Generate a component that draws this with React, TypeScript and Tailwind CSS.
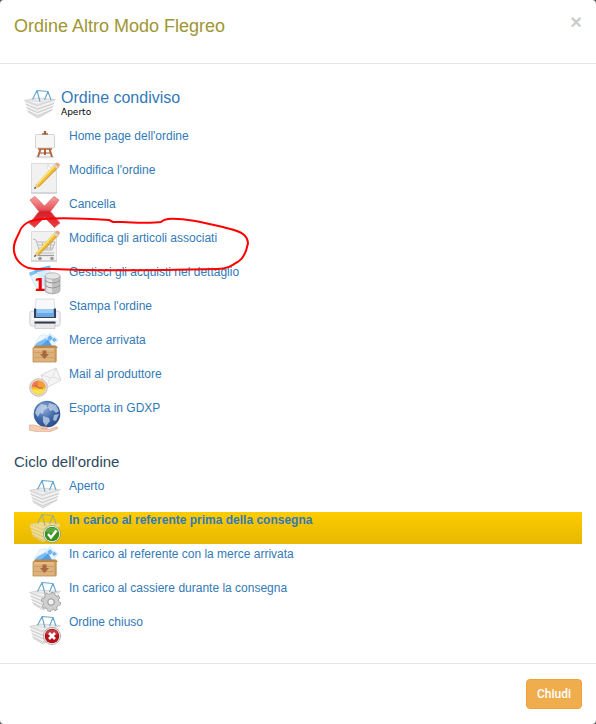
import React from 'react';

const Basket = () => (
  <g strokeLinejoin="round">
    <path d="M1 13 L31 12 L28 22 L14 30 L4 24 Z" fill="#e9e9e9" />
    <path d="M.5 12.500 L12 10 L31.500 11.500 L13 17.500 Z" fill="#e2e2e2" stroke="#cfcfcf" strokeWidth=".7" />
    <path d="M4 12.800 L13 11 L27 12 L13 16 Z" fill="#f1f1f1" />
    <path d="M6 13 L23 13 M9 12 L19 14.500" stroke="#d2d2d2" strokeWidth=".5" />
    <path d="M1.500 16 L13.500 21 L30 15.500 M2.500 19.500 L13.500 24.500 L29 18.500 M3.500 22.500 L13.500 28 L28.500 21.500" fill="none" stroke="#c4c4c4" strokeWidth=".8" />
    <path d="M1 14.500 L13 19.500 L30.500 13.500 M2 18 L13.500 23 L29.500 17 M3 21.300 L13.500 26.300 L29 20" fill="none" stroke="#fafafa" strokeWidth=".8" />
    <path d="M4 24 L14 30 L28 22" fill="none" stroke="#cccccc" strokeWidth=".8" />
    <path d="M8.500 11.500 L13 2.500 L24 3.500 L27 12 M16 13.500 L13 2.500 M20.500 12 L24 3.500" fill="none" stroke="#65a5cc" strokeWidth="1.100" />
  </g>
);

const Pencil = () => (
  <g>
    <path d="M5 27 L7 22.500 L26 2 L29.500 5 L9.500 25 Z" fill="#efbd2b" />
    <path d="M7.800 23 L26.500 3" stroke="#ffe58b" strokeWidth="1.200" />
    <path d="M9.500 25 L29.500 5" stroke="#c18a24" strokeWidth=".9" />
    <path d="M24.500 3.800 L26 2 L29.500 5 L27.700 6.800 Z" fill="#d6d6d6" />
    <path d="M26 2 L27.500 .8 Q30.500 .5 31 3.500 L29.500 5 Z" fill="#eba27f" />
    <path d="M5 27 L7 22.500 L9.500 25 Z" fill="#ead0a6" />
    <path d="M5 27 L6 24.800 L7.300 26 Z" fill="#333" />
  </g>
);

const Paper = () => (
  <g>
    <path d="M2.500 1.500 H27.500 V31 H2.500 Z" fill="#f1f1f1" stroke="#dcdcdc" />
    <path d="M2 31 H28" stroke="#c2c2c2" />
  </g>
);

const Crate = () => (
  <g>
    <path d="M5 13 L11 3.500 L17 2.500 L20 14 Z" fill="#eef6ff" stroke="#c9e1f8" strokeWidth=".6" />
    <path d="M15 7 L21 1 L29 8 L24 14 H15 Z" fill="#eaf5ff" stroke="#c4def6" strokeWidth=".6" />
    <path d="M18 6 L21 3 L24 6 L21 9 Z M23 8 L25 5.500 L28 8 L25 10 Z" fill="#6eb3f0" />
    <path d="M6 14 C8 9 13 9 17 6 L20 14 Z" fill="#7cbcf5" />
    <path d="M11 14 C15 12 17 9 19 7 L23 14 Z" fill="#4f9ee9" />
    <path d="M4 16 L6 13.500 H27 L29 16 Z" fill="#b98548" />
    <path d="M4 16 H27 V30 H4 Z" fill="#dcb17c" stroke="#bd8e52" strokeWidth=".8" />
    <path d="M25.500 16 L27.500 14 V29 L25.500 30 Z" fill="#c7965b" />
    <path d="M5 20.500 H25 M5 25.500 H25" stroke="#c69a62" strokeWidth=".7" />
    <path d="M5 17 H25" stroke="#f1cf9d" />
    <path d="M13.500 18.500 H17.500 V22 H20 L15.500 27 L11 22 H13.500 Z" fill="#a8683f" />
  </g>
);

type IconName = 'basket' | 'easel' | 'edit' | 'delete' | 'articles' | 'purchases' | 'print' | 'crate' | 'mail' | 'export' | 'basketOk' | 'basketGear' | 'basketClosed';

const drawings: Record<IconName, React.ReactNode> = {
  basket: <Basket />,
  basketOk: (
    <g>
      <g opacity=".6"><Basket /></g>
      <circle cx="23" cy="22" r="8.500" fill="#fff" stroke="#7a8a70" strokeWidth=".7" />
      <circle cx="23" cy="22" r="7.300" fill="#37901f" />
      <path d="M16.500 20 A7 7 0 0 1 29.500 20 Q23 22 16.500 20" fill="#5aa843" />
      <path d="M19 22 L22 25.500 L27.500 18.500" fill="none" stroke="#fff" strokeWidth="2.400" />
    </g>
  ),
  basketGear: (
    <g>
      <Basket />
      <circle cx="22" cy="22" r="8.600" fill="none" stroke="#8c8c8c" strokeWidth="2.600" strokeDasharray="3.400 3.355" />
      <circle cx="22" cy="22" r="5.700" fill="none" stroke="#8c8c8c" strokeWidth="5.400" />
      <circle cx="22" cy="22" r="8.200" fill="none" stroke="#cdcdcd" strokeWidth="2.200" strokeDasharray="2.800 3.640" strokeDashoffset="-.3" />
      <circle cx="22" cy="22" r="5.700" fill="none" stroke="#cfcfcf" strokeWidth="4.400" />
      <circle cx="22" cy="22" r="3" fill="#f3f3f3" stroke="#999" strokeWidth=".7" />
    </g>
  ),
  basketClosed: (
    <g>
      <Basket />
      <circle cx="23" cy="22" r="8.500" fill="#fff" stroke="#888" strokeWidth=".7" />
      <circle cx="23" cy="22" r="7.300" fill="#b5121b" />
      <path d="M16.500 20 A7 7 0 0 1 29.500 20 Q23 22 16.500 20" fill="#c63b40" />
      <path d="M20 19 L26 25 M26 19 L20 25" stroke="#fff" strokeWidth="2.600" />
    </g>
  ),
  easel: (
    <g>
      <ellipse cx="16" cy="29" rx="10" ry="1.500" fill="#dedede" />
      <path d="M14.800 3 H17.200 V7 H14.800 Z" fill="#a85c38" />
      <path d="M11.500 21 L9 29 M16 21 V27 M20.500 21 L23 29" stroke="#b5673f" strokeWidth="2" />
      <path d="M11 25 H21" stroke="#96502e" />
      <rect x="6.500" y="6.500" width="19" height="13.500" rx="1" fill="#f6f6f4" stroke="#d3d3d0" />
      <path d="M9 21 H23" stroke="#b9683c" strokeWidth="1.600" />
      <path d="M13 6 H19" stroke="#8d5233" strokeWidth="1.200" />
    </g>
  ),
  edit: (
    <g>
      <Paper />
      <path d="M19 2 Q20 8 27 9 L20 9 Q17 5 19 2 Z" fill="#fff" stroke="#d7d7d7" strokeWidth=".7" />
      <Pencil />
    </g>
  ),
  delete: (
    <g>
      <defs>
        <linearGradient id="crossFill" x1="0" y1="0" x2="0" y2="1">
          <stop offset="0" stopColor="#f7a3a3" />
          <stop offset=".42" stopColor="#e7535a" />
          <stop offset=".5" stopColor="#d41f2b" />
          <stop offset="1" stopColor="#ee3c42" />
        </linearGradient>
      </defs>
      <path d="M1 4 L6 .5 L15.500 10 L25 .5 L30 4 L21.500 15.500 L31 27 L25.500 31.500 L15.500 21.500 L5.500 31.500 L.5 27.500 L10 15.500 Z" fill="url(#crossFill)" stroke="#d9696c" strokeWidth=".8" strokeLinejoin="round" />
    </g>
  ),
  articles: (
    <g>
      <Paper />
      <path d="M4 9 L7 10 L11 23 H25 M8 12 H26 L23 20 H10 M9 15 H25 M10 18 H24 M13 12 L15 20 M18 12 V20 M22 12 L21 20" fill="none" stroke="#b4b4b4" strokeWidth=".9" />
      <path d="M8 25.500 H25" stroke="#9c9c9c" strokeWidth="1.200" />
      <circle cx="11" cy="28.500" r="1.800" fill="#999" />
      <circle cx="23" cy="28.500" r="1.800" fill="#999" />
      <Pencil />
    </g>
  ),
  purchases: (
    <g>
      <path d="M0 9 L10 5 L17 20 L8 25 Z" fill="#eaf6ff" stroke="#b9dcf4" strokeWidth=".7" />
      <path d="M0 9 L9 5 L10.500 8 L1.500 12 Z" fill="#7fc3ec" />
      <path d="M7 6 L21 2 L24 17 L13 21 Z" fill="#d8edfb" />
      <path d="M5 5 L21 1.500 L22 5 L7 8.500 Z" fill="#69b5e8" />
      <path d="M16 12 V26 C16 31 31 31 31 26 V12 Z" fill="#c0c0c0" stroke="#999" strokeWidth=".7" />
      <path d="M17.500 14 V27 Q20 29 23 29 V14 Z" fill="#e4e4e4" />
      <ellipse cx="23.500" cy="12" rx="7.500" ry="3.200" fill="#e6e6e6" stroke="#a3a3a3" strokeWidth=".7" />
      <path d="M16 16.500 Q23.500 21.500 31 16.500 M16 21.500 Q23.500 26.500 31 21.500" fill="none" stroke="#959595" />
      <text x="5" y="27" fontFamily="DejaVu Sans, sans-serif" fontSize="17" fontWeight="bold" fill="#ed0000">1</text>
    </g>
  ),
  print: (
    <g>
      <path d="M7 1 H25 L26 14 H6 Z" fill="#f9f9fc" stroke="#d3d5e0" strokeWidth=".8" />
      <rect x=".8" y="13" width="30.400" height="15" rx="2.500" fill="#f0f0f4" stroke="#c4c5cf" strokeWidth=".8" />
      <path d="M5 10.500 H7 V17 H25 V10.500 H27 V20 H5 Z" fill="#35415f" />
      <path d="M7 11 H25 V19 H7 Z" fill="#6ca8e4" />
      <path d="M8 11 H24 V15 H8 Z" fill="#98cbf5" />
      <path d="M3 21 H29" stroke="#fff" strokeWidth="2" />
      <path d="M6 25 H26 V30.500 H6 Z" fill="#e8e8eb" stroke="#bbb" strokeWidth=".6" />
      <path d="M5.500 24.500 H26.500" stroke="#333846" strokeWidth="2" />
    </g>
  ),
  crate: <Crate />,
  mail: (
    <g>
      <path d="M12 9 L27 2 L32 14 L17 22 Z" fill="#f4f4f4" stroke="#d2d2d2" strokeWidth=".8" />
      <path d="M12 9 L23 12 L27 2 M17 22 L21 12 M32 14 L24 11" fill="none" stroke="#dcdcdc" strokeWidth=".8" />
      <circle cx="9.500" cy="21.500" r="8.800" fill="#e9dcd2" stroke="#b3a59c" strokeWidth=".7" />
      <circle cx="9.500" cy="21.500" r="7" fill="#f7bd27" />
      <path d="M9.500 21.500 L2.500 21 A7 7 0 0 1 9.500 14.500 Z" fill="#ee7b55" />
      <path d="M9.500 21.500 V14.500 A7 7 0 0 1 16.500 21.500 Z" fill="#f59c3c" />
      <path d="M3 23.500 H16 A7 7 0 0 1 3 23.500" fill="#f7e354" />
      <path d="M6 19 L10 22 L14 22" fill="none" stroke="#b05a38" />
    </g>
  ),
  export: (
    <g>
      <defs>
        <radialGradient id="globeFill" cx=".4" cy=".3" r=".75">
          <stop offset="0" stopColor="#8fadd6" />
          <stop offset=".55" stopColor="#4068aa" />
          <stop offset="1" stopColor="#2c4a86" />
        </radialGradient>
      </defs>
      <circle cx="18" cy="14" r="13.300" fill="url(#globeFill)" />
      <path d="M8 8 L12 4 L17 5 L19 8 L15 10 L14 14 L11 13 L9 17 L6 13 Z M20 3 L27 5 L30 11 L27 13 L24 10 L21 11 L19 7 Z M14 16 L20 18 L21 21 L17 26 L14 22 Z M25 15 L30 14 L27 21 L24 20 Z" fill="#c8d7ea" opacity=".75" />
      <path d="M0 25 H5 L11 26.500 L18 27 Q20 28.500 17 29 L12 28.500 L20 29.500 L27 27 Q30 27 28 29 L20 32 H9 L0 30 Z" fill="#f4cdb2" stroke="#d5a58a" strokeWidth=".6" />
    </g>
  ),
};

const Icon = ({ name }: { name: IconName }) => (
  <svg viewBox="0 0 32 32" className="size-8 shrink-0" aria-hidden="true">{drawings[name]}</svg>
);

type Item = { icon: IconName; label: string; active?: boolean; circled?: boolean };

const actions: Item[] = [
  { icon: 'easel', label: "Home page dell'ordine" },
  { icon: 'edit', label: "Modifica l'ordine" },
  { icon: 'delete', label: 'Cancella' },
  { icon: 'articles', label: 'Modifica gli articoli associati', circled: true },
  { icon: 'purchases', label: 'Gestisci gli acquisti nel dettaglio' },
  { icon: 'print', label: "Stampa l'ordine" },
  { icon: 'crate', label: 'Merce arrivata' },
  { icon: 'mail', label: 'Mail al produttore' },
  { icon: 'export', label: 'Esporta in GDXP' },
];

const cycle: Item[] = [
  { icon: 'basket', label: 'Aperto' },
  { icon: 'basketOk', label: 'In carico al referente prima della consegna', active: true },
  { icon: 'crate', label: 'In carico al referente con la merce arrivata' },
  { icon: 'basketGear', label: 'In carico al cassiere durante la consegna' },
  { icon: 'basketClosed', label: 'Ordine chiuso' },
];

const ItemList = ({ items }: { items: Item[] }) => (
  <ul className="flex flex-col gap-0.5">
    {items.map((item) => (
      <li
        key={item.label}
        className={item.active ? 'bg-linear-to-b from-[#ffcc00] to-[#e6b800] font-bold' : item.circled ? 'relative' : ''}
      >
        <a href="#" className="flex gap-2 pl-[15px] text-xs text-[#337ab7]">
          <Icon name={item.icon} />
          <span>{item.label}</span>
        </a>
        {item.circled && (
          <svg viewBox="0 0 240 60" className="pointer-events-none absolute -top-4 -left-1 z-10 h-[60px] w-[240px]" fill="none" aria-hidden="true">
            <path
              d="M151 8 C146 9 124 9 112 8 L103 8 L99 6 C70 4 44 4 33 5 C19 6 12 10 9 19 C6 25 3 30 4 37 C5 45 9 49 14 52 C20 56 30 55 43 55 C85 57 160 56 207 55 C218 55 223 51 229 47 C236 42 237 34 238 29 C237 18 227 17 213 13 C192 8 174 4 158 5 C152 6 153 7 151 8 Z"
              stroke="#ff0000"
              strokeWidth="2"
              strokeLinejoin="round"
            />
          </svg>
        )}
      </li>
    ))}
  </ul>
);

export default function App() {
  return (
    <div className="bg-[#555]">
      <main className="rounded-sm bg-white font-['Liberation_Sans',Arial,sans-serif]">
        <header className="flex items-start justify-between border-b border-[#e5e5e5] px-3.5 pt-3 pb-[23px]">
          <h1 className="text-lg leading-7 text-[#a09632]">Ordine Altro Modo Flegreo</h1>
          <button type="button" aria-label="Close" className="text-xl leading-5 font-bold text-[#cccccc]">×</button>
        </header>
        <section className="px-3.5 pt-6 pb-[17px]">
          <div className="flex gap-[5px] pl-2.5">
            <Icon name="basket" />
            <div className="pb-1.5">
              <h2><a href="#" className="block text-base leading-5 text-[#337ab7]">Ordine condiviso</a></h2>
              <p className="font-['DejaVu_Sans',sans-serif] text-[9px] leading-2 text-black">Aperto</p>
            </div>
          </div>
          <div className="pt-1.5">
            <ItemList items={actions} />
          </div>
          <h3 className="pt-5 pb-1.5 text-[15px] leading-5 text-[#2c4a5e]">Ciclo dell'ordine</h3>
          <ItemList items={cycle} />
        </section>
        <footer className="flex justify-end border-t border-[#e5e5e5] px-3.5 py-[15px]">
          <button type="button" className="rounded-sm border border-[#eea236] bg-[#f0ad4e] px-2.5 py-1.5 font-[Roboto,sans-serif] text-xs font-medium text-white">Chiudi</button>
        </footer>
      </main>
    </div>
  );
}
